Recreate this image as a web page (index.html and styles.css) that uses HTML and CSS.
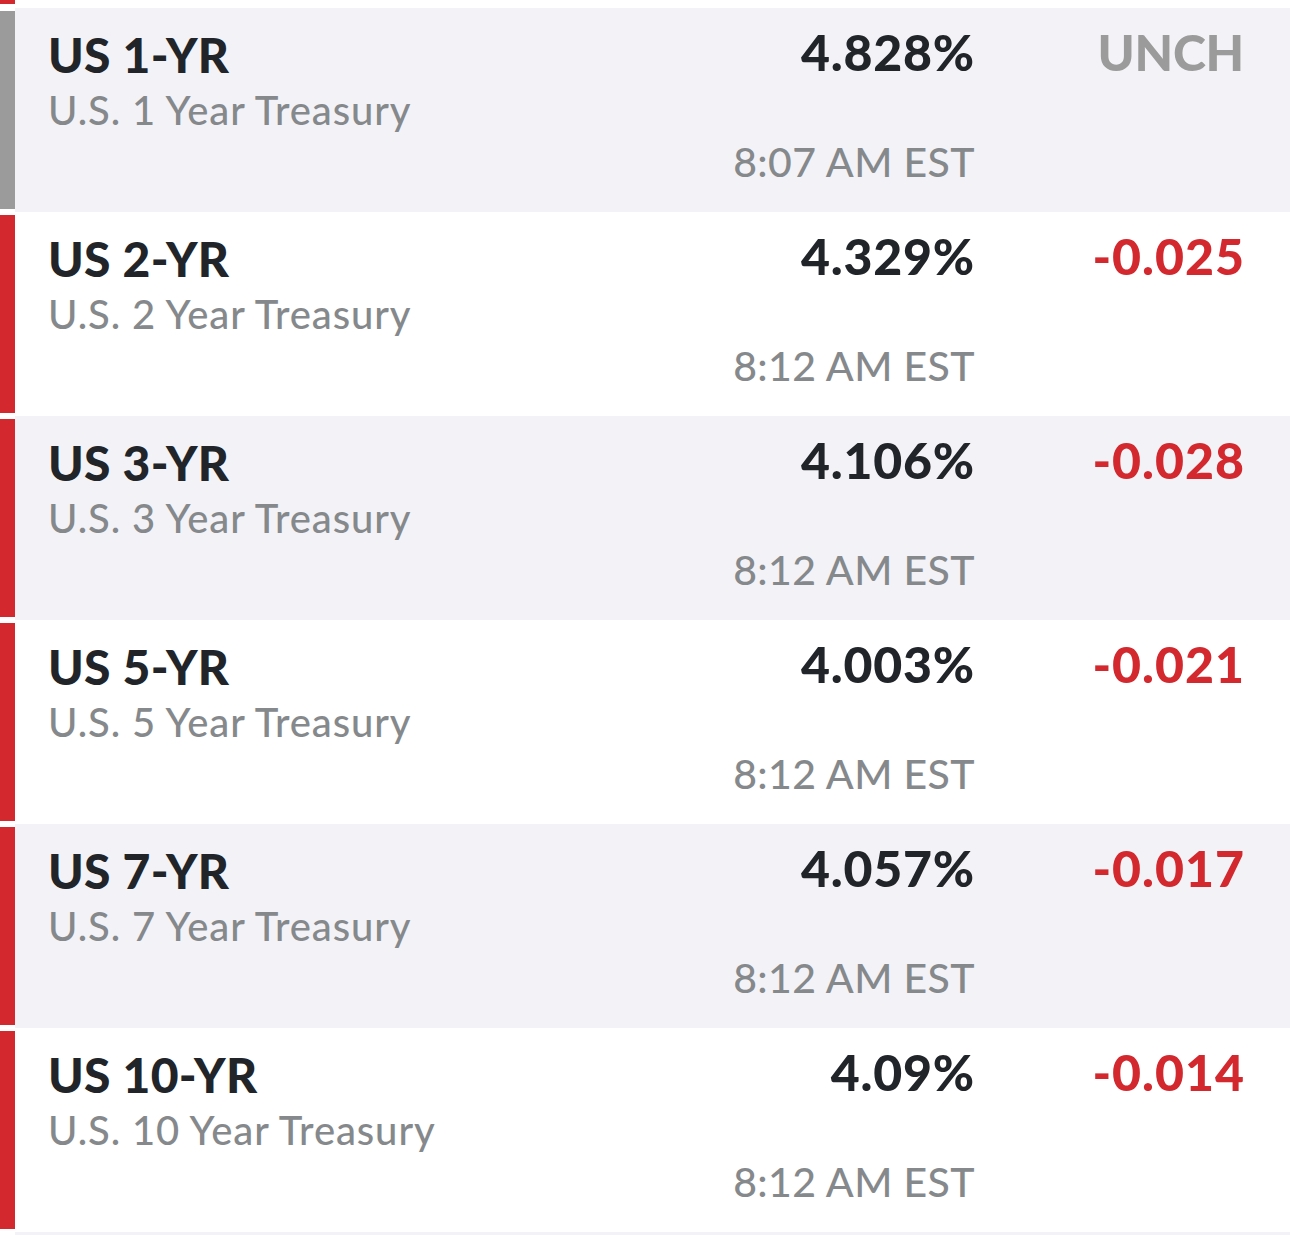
FILE: index.html
```html
<!DOCTYPE html>
<html>
<head>
<meta charset="utf-8">
<link rel="stylesheet" href="styles.css">
</head>
<body>
<div class="list">
  <div class="row row-white row-prev"><div class="bar bar-red"></div></div>
  <div class="row row-gray">
    <div class="bar bar-gray"></div>
    <div class="info"><div class="sym">US 1-YR</div><div class="name">U.S. 1 Year Treasury</div></div>
    <div class="quote"><div class="price">4.828%</div><div class="time">8:07 AM EST</div></div>
    <div class="chg chg-unch">UNCH</div>
  </div>
  <div class="row row-white">
    <div class="bar bar-red"></div>
    <div class="info"><div class="sym">US 2-YR</div><div class="name">U.S. 2 Year Treasury</div></div>
    <div class="quote"><div class="price">4.329%</div><div class="time">8:12 AM EST</div></div>
    <div class="chg chg-down">-0.025</div>
  </div>
  <div class="row row-gray">
    <div class="bar bar-red"></div>
    <div class="info"><div class="sym">US 3-YR</div><div class="name">U.S. 3 Year Treasury</div></div>
    <div class="quote"><div class="price">4.106%</div><div class="time">8:12 AM EST</div></div>
    <div class="chg chg-down">-0.028</div>
  </div>
  <div class="row row-white">
    <div class="bar bar-red"></div>
    <div class="info"><div class="sym">US 5-YR</div><div class="name">U.S. 5 Year Treasury</div></div>
    <div class="quote"><div class="price">4.003%</div><div class="time">8:12 AM EST</div></div>
    <div class="chg chg-down">-0.021</div>
  </div>
  <div class="row row-gray">
    <div class="bar bar-red"></div>
    <div class="info"><div class="sym">US 7-YR</div><div class="name">U.S. 7 Year Treasury</div></div>
    <div class="quote"><div class="price">4.057%</div><div class="time">8:12 AM EST</div></div>
    <div class="chg chg-down">-0.017</div>
  </div>
  <div class="row row-white">
    <div class="bar bar-red"></div>
    <div class="info"><div class="sym">US 10-YR</div><div class="name">U.S. 10 Year Treasury</div></div>
    <div class="quote"><div class="price">4.09%</div><div class="time">8:12 AM EST</div></div>
    <div class="chg chg-down">-0.014</div>
  </div>
  <div class="row row-gray row-next"></div>
</div>
</body>
</html>
```

FILE: styles.css
```css
html, body {
  margin: 0;
  padding: 0;
  background: #ffffff;
}
body {
  font-family: Lato, "Noto Sans", sans-serif;
  width: 1290px;
  height: 1235px;
  overflow: hidden;
}
.list {
  display: flex;
  flex-direction: column;
}
.row {
  display: grid;
  grid-template-columns: 15px 1fr auto 270px;
  height: 204px;
  padding-right: 48px;
  box-sizing: border-box;
}
.row-prev {
  height: 8px;
}
.row-prev .bar {
  margin: 0 0 4px 0;
}
.row-next {
  height: 3px;
}
.row-gray { background: linear-gradient(to right, #ffffff 15px, #f3f3f7 15px); }
.row-white { background: #ffffff; }
.bar {
  margin: 3px 0;
}
.bar-red { background: #d2282e; }
.bar-gray { background: #9b9b9b; }
.info {
  padding-left: 33px;
  padding-top: 19px;
}
.sym {
  font-weight: 900;
  font-size: 48px;
  line-height: 56px;
  color: #212529;
  letter-spacing: 0.3px;
}
.name {
  margin-top: 3px;
  font-size: 40px;
  font-weight: 500;
  line-height: 48px;
  color: #86898c;
  letter-spacing: 0.9px;
}
.quote {
  display: flex;
  flex-direction: column;
  justify-content: space-between;
  align-items: flex-end;
  padding-top: 16px;
  padding-bottom: 26px;
}
.price {
  font-weight: 900;
  font-size: 50px;
  line-height: 56px;
  color: #212529;
  letter-spacing: 0.8px;
  margin-right: -3px;
}
.time {
  font-size: 41px;
  font-weight: 500;
  line-height: 48px;
  color: #86898c;
  letter-spacing: 0.4px;
  margin-right: -3px;
}
.chg {
  text-align: right;
  font-weight: 900;
  font-size: 50px;
  line-height: 56px;
  padding-top: 16px;
}
.chg-unch { color: #9b9b9b; letter-spacing: -0.3px; margin-right: -2px; }
.chg-down { color: #d2282e; letter-spacing: 1px; margin-right: -3px; }
```
